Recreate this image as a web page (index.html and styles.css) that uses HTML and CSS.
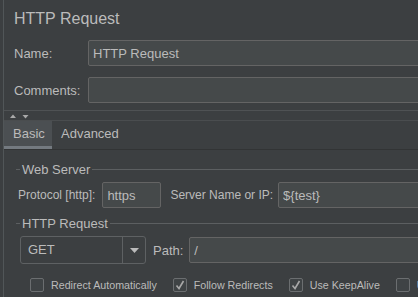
FILE: index.html
```html
<!DOCTYPE html>
<html lang="en">
<head>
    <meta charset="UTF-8">
    <title>HTTP Request</title>
    <link rel="stylesheet" href="styles.css">
</head>
<body>
    <div class="panel">
        <h1 class="title">HTTP Request</h1>
        <div class="field-row">
            <label class="field-label">Name:</label>
            <input class="text-input" type="text" value="HTTP Request">
        </div>
        <div class="field-row">
            <label class="field-label">Comments:</label>
            <input class="text-input" type="text" value="">
        </div>
        <div class="splitter">
            <svg width="30" height="8" viewBox="0 0 30 8">
                <path d="M6 6 L9 2.5 L12 6 Z" fill="#a9a9a9"/>
                <path d="M18.5 3 L24.5 3 L21.5 6.5 Z" fill="#a9a9a9"/>
            </svg>
        </div>
        <div class="tabs">
            <div class="tab active">Basic</div>
            <div class="tab">Advanced</div>
        </div>
        <div class="tab-body">
            <div class="group-title first"><span>Web Server</span></div>
            <div class="server-row">
                <label>Protocol [http]:</label>
                <input class="text-input protocol" type="text" value="https">
                <label class="server-label">Server Name or IP:</label>
                <input class="text-input" type="text" value="${test}">
            </div>
            <div class="group-title"><span>HTTP Request</span></div>
            <div class="method-row">
                <div class="combo">
                    <span class="combo-value">GET</span>
                    <span class="combo-btn">
                        <svg width="9" height="5" viewBox="0 0 9 5"><path d="M0 0 H9 L4.5 5 Z" fill="#bbbbbb"/></svg>
                    </span>
                </div>
                <label class="path-label">Path:</label>
                <input class="text-input" type="text" value="/">
            </div>
            <div class="checks">
                <label class="check"><span class="box"></span>Redirect Automatically</label>
                <label class="check"><span class="box checked"><svg width="12" height="12" viewBox="0 0 12 12"><path d="M2.5 6.5 L5 9.5 L9.5 2" fill="none" stroke="#a8a8a8" stroke-width="1.6"/></svg></span>Follow Redirects</label>
                <label class="check"><span class="box checked"><svg width="12" height="12" viewBox="0 0 12 12"><path d="M2.5 6.5 L5 9.5 L9.5 2" fill="none" stroke="#a8a8a8" stroke-width="1.6"/></svg></span>Use KeepAlive</label>
                <label class="check"><span class="box"></span>Use multipart/form-data</label>
            </div>
        </div>
    </div>
</body>
</html>
```

FILE: styles.css
```css
html, body {
    margin: 0;
    padding: 0;
    height: 100%;
    background: #3c3f41;
    overflow: hidden;
}
body {
    font-family: "Liberation Sans", Arial, sans-serif;
    color: #bbbbbb;
    font-size: 13px;
}
.panel {
    margin-left: 3px;
    border-left: 1px solid #515658;
    height: 100%;
    overflow: hidden;
}
.title {
    margin: 0;
    padding: 9px 0 0 10px;
    height: 19px;
    line-height: 20px;
    font-size: 16px;
    font-weight: normal;
}
.field-row {
    display: flex;
    align-items: center;
    height: 26px;
    margin-top: 12px;
}
.field-row + .field-row {
    margin-top: 11px;
}
.field-label {
    width: 84px;
    padding-left: 10px;
    box-sizing: border-box;
}
.text-input {
    flex: 1;
    min-width: 0;
    height: 26px;
    box-sizing: border-box;
    background: #45494a;
    border: 1px solid #646464;
    border-radius: 2px;
    color: #bbbbbb;
    font: inherit;
    padding: 0 4px;
    margin-right: -8px;
    outline: none;
}
.splitter {
    margin-top: 7px;
    border-top: 1px solid #4f5254;
    height: 8px;
    padding-top: 1px;
    display: flex;
    align-items: center;
}
.splitter svg {
    display: block;
}
.tabs {
    display: flex;
    border-top: 1px solid #4a4d4f;
    border-bottom: 1px solid #323435;
    height: 28px;
}
.tab {
    padding: 0 9px;
    line-height: 26px;
    font-size: 13px;
    border-bottom: 3px solid transparent;
    height: 25px;
}
.tab.active {
    background: #4b4f52;
    border-bottom-color: #747a80;
    width: 30px;
}
.tab-body {
    padding-left: 12px;
    font-size: 12px;
}
.group-title {
    display: flex;
    align-items: center;
    margin-top: 6px;
    height: 18px;
}
.group-title.first {
    margin-top: 10px;
}
.group-title::before {
    content: "";
    width: 4px;
    border-top: 1px solid #5c5f61;
}
.group-title::after {
    content: "";
    flex: 1;
    border-top: 1px solid #5c5f61;
}
.group-title span {
    padding: 0 2px;
    font-size: 13px;
}
.server-row {
    display: flex;
    align-items: center;
    height: 26px;
    margin-top: 4px;
    padding-left: 2px;
}
.server-row .text-input,
.method-row .text-input {
    font-size: 13px;
}
.protocol {
    flex: none;
    width: 59px;
    margin-left: 7px;
    margin-right: 0;
}
.server-label {
    margin-left: 9px;
    margin-right: 5px;
}
.method-row {
    display: flex;
    align-items: center;
    margin-top: 4px;
    height: 28px;
    padding-left: 4px;
}
.combo {
    display: flex;
    width: 126px;
    height: 28px;
    box-sizing: border-box;
    border: 1px solid #5e6163;
    border-radius: 3px;
    background: #3c3f41;
    font-size: 13px;
}
.combo-value {
    flex: 1;
    padding-left: 7px;
    line-height: 26px;
}
.combo-btn {
    width: 22px;
    border-left: 1px solid #5e6163;
    display: flex;
    align-items: center;
    justify-content: center;
}
.path-label {
    margin-left: 7px;
    margin-right: 6px;
    font-size: 13px;
}
.checks {
    display: flex;
    align-items: center;
    margin-top: 14px;
    padding-left: 14px;
    gap: 16px;
    font-size: 10.7px;
    white-space: nowrap;
}
.check {
    display: flex;
    align-items: center;
    gap: 7px;
}
.box {
    width: 14px;
    height: 14px;
    flex: none;
    box-sizing: border-box;
    border: 1px solid #6b6e70;
    border-radius: 2px;
    background: #3f4345;
    display: flex;
    align-items: center;
    justify-content: center;
}
```
